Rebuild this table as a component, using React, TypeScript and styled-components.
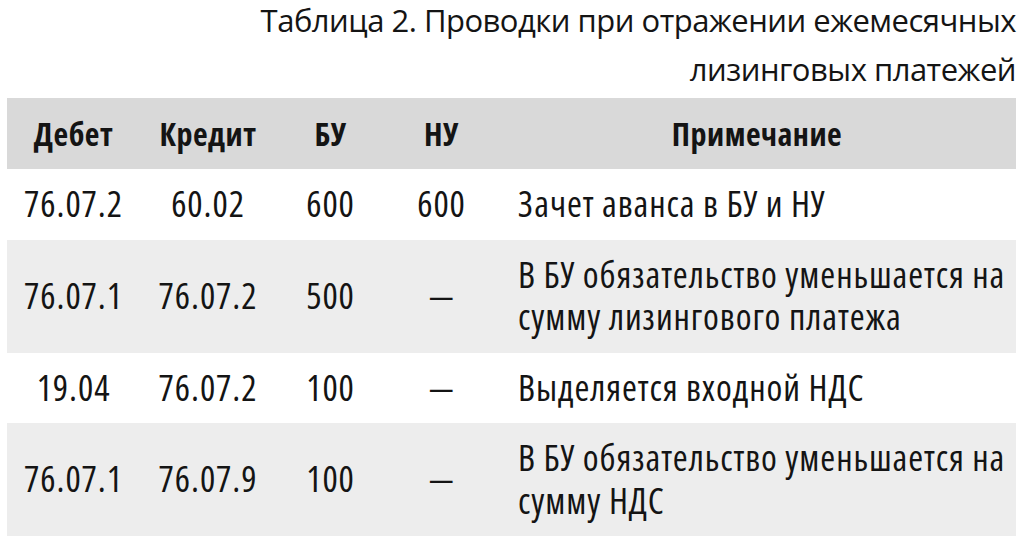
import styled, { createGlobalStyle } from "styled-components";

const GlobalStyle = createGlobalStyle`
  html, body {
    margin: 0;
    padding: 0;
    background: #ffffff;
  }
  body {
    font-family: "Open Sans", "DejaVu Sans Condensed", sans-serif;
    color: #141414;
  }
`;

const Page = styled.div`
  width: 1024px;
  height: 540px;
  overflow: hidden;
  padding: 0 8px 0 7px;
  box-sizing: border-box;
`;

const Caption = styled.div`
  text-align: right;
  font-size: 31px;
  font-stretch: 100%;
  letter-spacing: -0.5px;
  line-height: 49px;
  height: 98px;
  margin-top: -4px;
`;

const Table = styled.table`
  width: 1009px;
  border-collapse: collapse;
  table-layout: fixed;
  margin-top: 4px;
  font-stretch: 75%;
`;

const HeadRow = styled.tr`
  background: #d9d9d9;
  height: 71px;
`;

const Row = styled.tr<{ $shade?: boolean }>`
  background: ${(p) => (p.$shade ? "#ededed" : "#ffffff")};
`;

const Th = styled.th<{ $w: number }>`
  width: ${(p) => p.$w}px;
  padding: 0;
  font-size: 32px;
  font-weight: 700;
  letter-spacing: 0.5px;
  text-align: center;
  vertical-align: middle;
`;

const Td = styled.td<{ $left?: boolean }>`
  padding: ${(p) => (p.$left ? "14px 0 14px 20px" : "14px 0")};
  font-size: 36px;
  letter-spacing: 0.9px;
  line-height: 42.5px;
  text-align: ${(p) => (p.$left ? "left" : "center")};
  vertical-align: middle;
`;

const Dash = styled.span`
  display: inline-block;
  transform: scaleX(0.68);
`;

const columns = [
  { title: "Дебет", w: 133 },
  { title: "Кредит", w: 136 },
  { title: "БУ", w: 109 },
  { title: "НУ", w: 113 },
  { title: "Примечание", w: 518 },
];

const rows = [
  { debit: "76.07.2", credit: "60.02", bu: "600", nu: "600", note: "Зачет аванса в БУ и НУ" },
  {
    debit: "76.07.1",
    credit: "76.07.2",
    bu: "500",
    nu: "—",
    note: "В БУ обязательство уменьшается на сумму лизингового платежа",
  },
  { debit: "19.04", credit: "76.07.2", bu: "100", nu: "—", note: "Выделяется входной НДС" },
  {
    debit: "76.07.1",
    credit: "76.07.9",
    bu: "100",
    nu: "—",
    note: "В БУ обязательство уменьшается на сумму НДС",
  },
];

export default function App() {
  return (
    <Page>
      <GlobalStyle />
      <Caption>
        Таблица 2. Проводки при отражении ежемесячных
        <br />
        лизинговых платежей
      </Caption>
      <Table>
        <thead>
          <HeadRow>
            {columns.map((c) => (
              <Th key={c.title} $w={c.w}>
                {c.title}
              </Th>
            ))}
          </HeadRow>
        </thead>
        <tbody>
          {rows.map((r, i) => (
            <Row key={i} $shade={i % 2 === 1}>
              <Td>{r.debit}</Td>
              <Td>{r.credit}</Td>
              <Td>{r.bu}</Td>
              <Td>{r.nu === "—" ? <Dash>—</Dash> : r.nu}</Td>
              <Td $left>{r.note}</Td>
            </Row>
          ))}
        </tbody>
      </Table>
    </Page>
  );
}
